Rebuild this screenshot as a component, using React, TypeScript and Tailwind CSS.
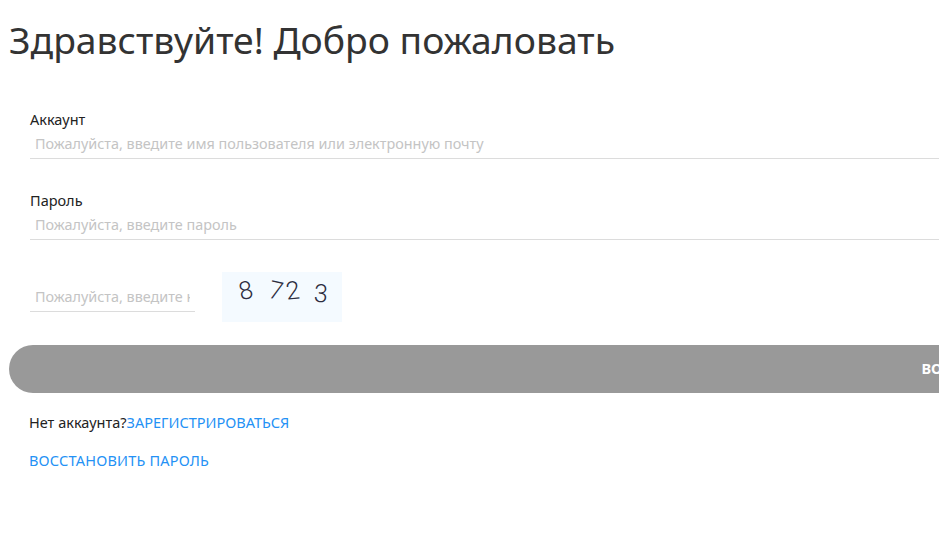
const font = { fontFamily: '"Noto Sans", "Open Sans", sans-serif' };

function Field({ label, placeholder, className }: { label: string; placeholder: string; className?: string }) {
  return (
    <div className={className}>
      <label className="block h-[20px] text-[14.5px] leading-[18px] text-[#222]">{label}</label>
      <input
        readOnly
        placeholder={placeholder}
        className="block h-[29px] w-full border-b border-[#dcdcdc] px-[5px] pb-[2px] text-[14.4px] outline-none placeholder:text-[#c4c4c4]"
      />
    </div>
  );
}

export default function App() {
  return (
    <div className="h-[534px] w-[939px] overflow-hidden bg-white" style={font}>
      <div className="w-[1886px] pl-[9px]">
        <h1 className="pt-[16px] text-[37.3px] leading-[48px] text-[#333]">Здравствуйте! Добро пожаловать</h1>

        <div className="pl-[21px] pt-[46px]">
          <Field label="Аккаунт" placeholder="Пожалуйста, введите имя пользователя или электронную почту" />
          <Field className="mt-[32px]" label="Пароль" placeholder="Пожалуйста, введите пароль" />

          <div className="mt-[32px] flex items-start">
            <div className="w-[165px] border-b border-[#dcdcdc] pr-[5px] pt-[12px]">
              <input
                readOnly
                placeholder="Пожалуйста, введите код"
                className="block h-[27px] w-full pb-[3px] pl-[5px] text-[14.4px] outline-none placeholder:text-[#c4c4c4]"
              />
            </div>
            <div
              className="ml-[27px] flex h-[50px] w-[120px] items-start bg-[#f4faff] pl-[17px] pt-[5px] text-[25px] font-light leading-[28px] text-[#2c2c40]"
              style={{ fontFamily: 'Roboto, sans-serif' }}
            >
              <span className="inline-block -rotate-12">8</span>
              <span className="ml-[16px] inline-block rotate-12">7</span>
              <span className="ml-[3px] inline-block -rotate-6">2</span>
              <span className="ml-[14px] mt-[3px] inline-block rotate-3">3</span>
            </div>
          </div>
        </div>

        <button className="mt-[23px] block h-[48px] w-full rounded-[24px] bg-[#999] text-[14.5px] font-bold text-white">
          ВОЙТИ
        </button>

        <div className="pl-[20px] pt-[19px] text-[14.5px] leading-[20px]">
          <p className="text-[#222]">
            Нет аккаунта?<a className="text-[#2491f5]">ЗАРЕГИСТРИРОВАТЬСЯ</a>
          </p>
          <p className="mt-[18px] tracking-[0.2px] text-[#2491f5]">ВОССТАНОВИТЬ ПАРОЛЬ</p>
        </div>
      </div>
    </div>
  );
}
